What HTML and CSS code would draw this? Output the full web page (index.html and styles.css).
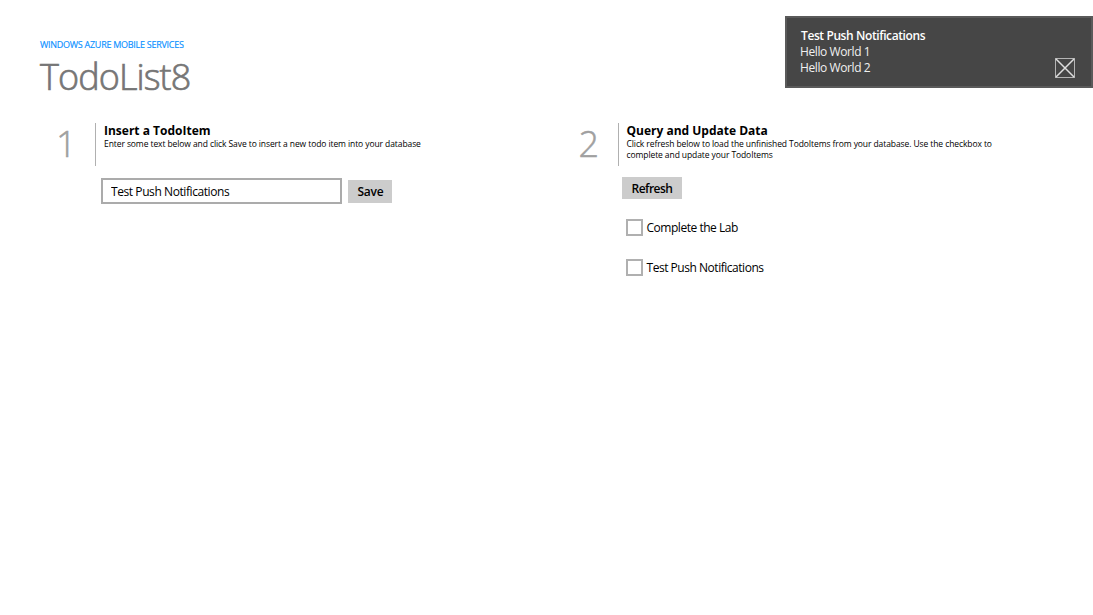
FILE: index.html
```html
<!DOCTYPE html>
<html lang="en">
<head>
<meta charset="utf-8">
<title>TodoList8</title>
<link rel="stylesheet" href="styles.css">
</head>
<body>
<header class="page-header">
  <p class="eyebrow">WINDOWS AZURE MOBILE SERVICES</p>
  <h1 class="title">TodoList8</h1>
</header>
<main class="columns">
  <section class="step">
    <div class="step-head">
      <div class="number">1</div>
      <div class="intro">
        <h2>Insert a TodoItem</h2>
        <p>Enter some text below and click Save to insert a new todo item into your database</p>
      </div>
    </div>
    <div class="form">
      <input class="field" type="text" value="Test Push Notifications" aria-label="Todo item">
      <button class="btn save">Save</button>
    </div>
  </section>
  <section class="step">
    <div class="step-head">
      <div class="number">2</div>
      <div class="intro">
        <h2>Query and Update Data</h2>
        <p>Click refresh below to load the unfinished TodoItems from your database. Use the checkbox to<br>complete and update your TodoItems</p>
      </div>
    </div>
    <button class="btn refresh">Refresh</button>
    <ul class="items">
      <li><span class="box"></span><span class="label">Complete the Lab</span></li>
      <li><span class="box"></span><span class="label">Test Push Notifications</span></li>
    </ul>
  </section>
</main>
<aside class="toast">
  <div class="toast-text">
    <strong>Test Push Notifications</strong>
    <span>Hello World 1</span>
    <span>Hello World 2</span>
  </div>
  <svg class="toast-icon" width="20" height="20" viewBox="0 0 20 20">
    <rect x=".5" y=".5" width="19" height="19" fill="none" stroke="#b4b4b4"/>
    <path d="M1 1L19 19M19 1L1 19" stroke="#dedede" stroke-width="1.5"/>
  </svg>
</aside>
</body>
</html>
```

FILE: styles.css
```css
* { box-sizing: border-box; margin: 0; padding: 0; }
body {
  width: 1093px; height: 615px; overflow: hidden; background: #fff; color: #000;
  font-family: "Open Sans", "Noto Sans", sans-serif; white-space: nowrap;
}
.page-header { padding: 38px 0 0 40px; height: 123px; }
.eyebrow { font-size: 9px; line-height: 14px; letter-spacing: -0.27px; color: #0a90ff; -webkit-text-stroke: 0.15px; }
.title { font-size: 36px; line-height: 49px; font-weight: 300; letter-spacing: -0.9px; color: #767676; -webkit-text-stroke: 0.7px; }
.columns { display: grid; grid-template-columns: 522.5px 1fr; padding-left: 57px; }
.step-head { display: flex; height: 43px; }
.number { width: 38px; font-size: 36px; line-height: 42px; font-weight: 300; text-indent: -1px; color: #a0a0a0; -webkit-text-stroke: 0.5px; }
.intro { border-left: 1px solid #b0b0b0; padding-left: 8px; }
.intro h2 { font-size: 12px; line-height: 16px; font-weight: 700; }
.intro p { font-size: 8.5px; line-height: 10.5px; letter-spacing: -0.09px; }
.form { display: flex; align-items: center; gap: 6px; padding: 12px 0 0 44px; }
.field {
  width: 241px; height: 26px; border: 2px solid #ababab; padding: 0 8px; outline: 0;
  font: 12px "Open Sans", sans-serif; letter-spacing: -0.42px;
}
.btn { border: 0; background: #ccc; color: #000; font: 600 12px "Open Sans", sans-serif; letter-spacing: -0.5px; text-indent: 1px; }
.save { width: 44px; height: 23px; letter-spacing: -0.2px; }
.refresh { display: block; width: 60px; height: 22px; margin: 11px 0 0 42px; }
.items { list-style: none; padding: 8px 0 0 46px; }
.items li { display: flex; align-items: center; height: 40px; gap: 4px; font-size: 12px; letter-spacing: -0.47px; }
.label { padding-top: 1px; }
.box { width: 17px; height: 17px; border: 2px solid #b0b0b0; }
.toast {
  position: absolute; left: 785px; top: 16px; width: 308px; height: 72px;
  display: flex; justify-content: space-between; padding: 10px 16px 0 13px;
  background: #464646; border: 2px solid #5a5a5a; color: #f0f0f0;
}
.toast-text { display: flex; flex-direction: column; font-size: 12px; line-height: 16px; letter-spacing: -0.4px; }
.toast-text strong { font-weight: 600; color: #fff; padding-left: 1px; }
.toast-icon { margin-top: 30px; }
```
